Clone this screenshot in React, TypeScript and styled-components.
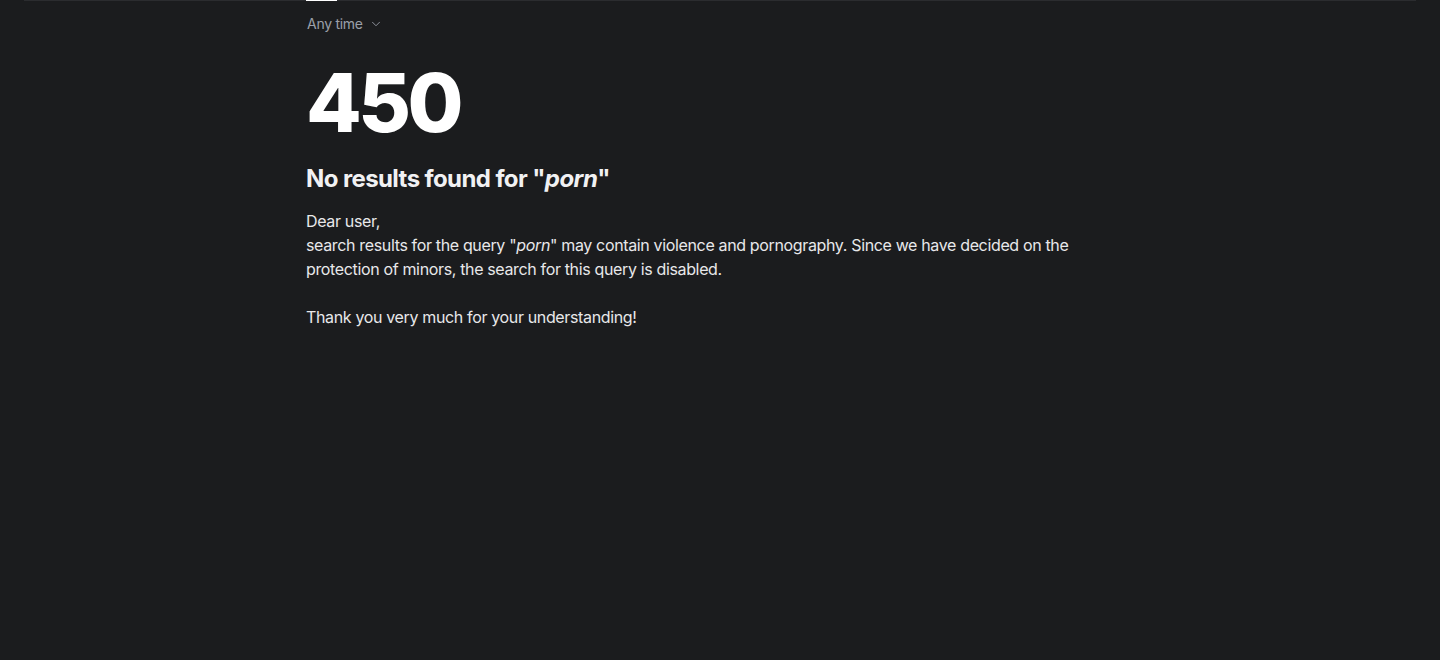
import React from 'react'
import styled, { createGlobalStyle } from 'styled-components'
import { ChevronDown } from 'lucide-react'

const GlobalStyle = createGlobalStyle`
  html, body {
    margin: 0;
    padding: 0;
    background: #1b1c1e;
    font-family: Inter, 'Noto Sans', sans-serif;
    letter-spacing: -0.022em;
  }
`

const Page = styled.div`
  min-height: 660px;
  background: #1b1c1e;
  padding: 0 24px;
`

const TabBar = styled.div`
  height: 1px;
  background: #2b2c2f;
  padding-left: 282px;
`

const ActiveTab = styled.div`
  width: 31px;
  height: 1px;
  background: #ffffff;
`

const Content = styled.main`
  width: 800px;
  margin-left: 282px;
`

const Filter = styled.button`
  display: flex;
  align-items: center;
  gap: 6px;
  margin-top: 13px;
  padding: 0 0 0 1px;
  background: none;
  border: none;
  color: #9ba0aa;
  font-family: inherit;
  letter-spacing: -0.02em;
  font-size: 14px;
  line-height: 20px;
  cursor: pointer;
`

const Code = styled.h1`
  margin: 25px 0 0;
  font-size: 81px;
  line-height: 88px;
  font-weight: 800;
  letter-spacing: -3.5px;
  color: #ffffff;
`

const Title = styled.h2`
  margin: 16px 0 0;
  font-size: 24px;
  line-height: 32px;
  font-weight: 700;
  letter-spacing: -0.025em;
  color: #f1f1f3;
`

const Message = styled.p`
  margin: 14px 0 0;
  font-size: 16px;
  line-height: 24px;
  color: #e8e8ea;
  white-space: pre-line;
`

const Query = styled.em`
  font-style: italic;
`

export default function App() {
  return (
    <>
      <GlobalStyle />
      <Page>
        <TabBar>
          <ActiveTab />
        </TabBar>
        <Content>
          <Filter>
            Any time
            <ChevronDown size={14} strokeWidth={1.5} />
          </Filter>
          <Code>450</Code>
          <Title>
            No results found for "<Query>porn</Query>"
          </Title>
          <Message>
            Dear user,{'\n'}search results for the query "<Query>porn</Query>" may contain violence and
            pornography. Since we have decided on the protection of minors, the search for this query is
            disabled.{'\n\n'}Thank you very much for your understanding!
          </Message>
        </Content>
      </Page>
    </>
  )
}
